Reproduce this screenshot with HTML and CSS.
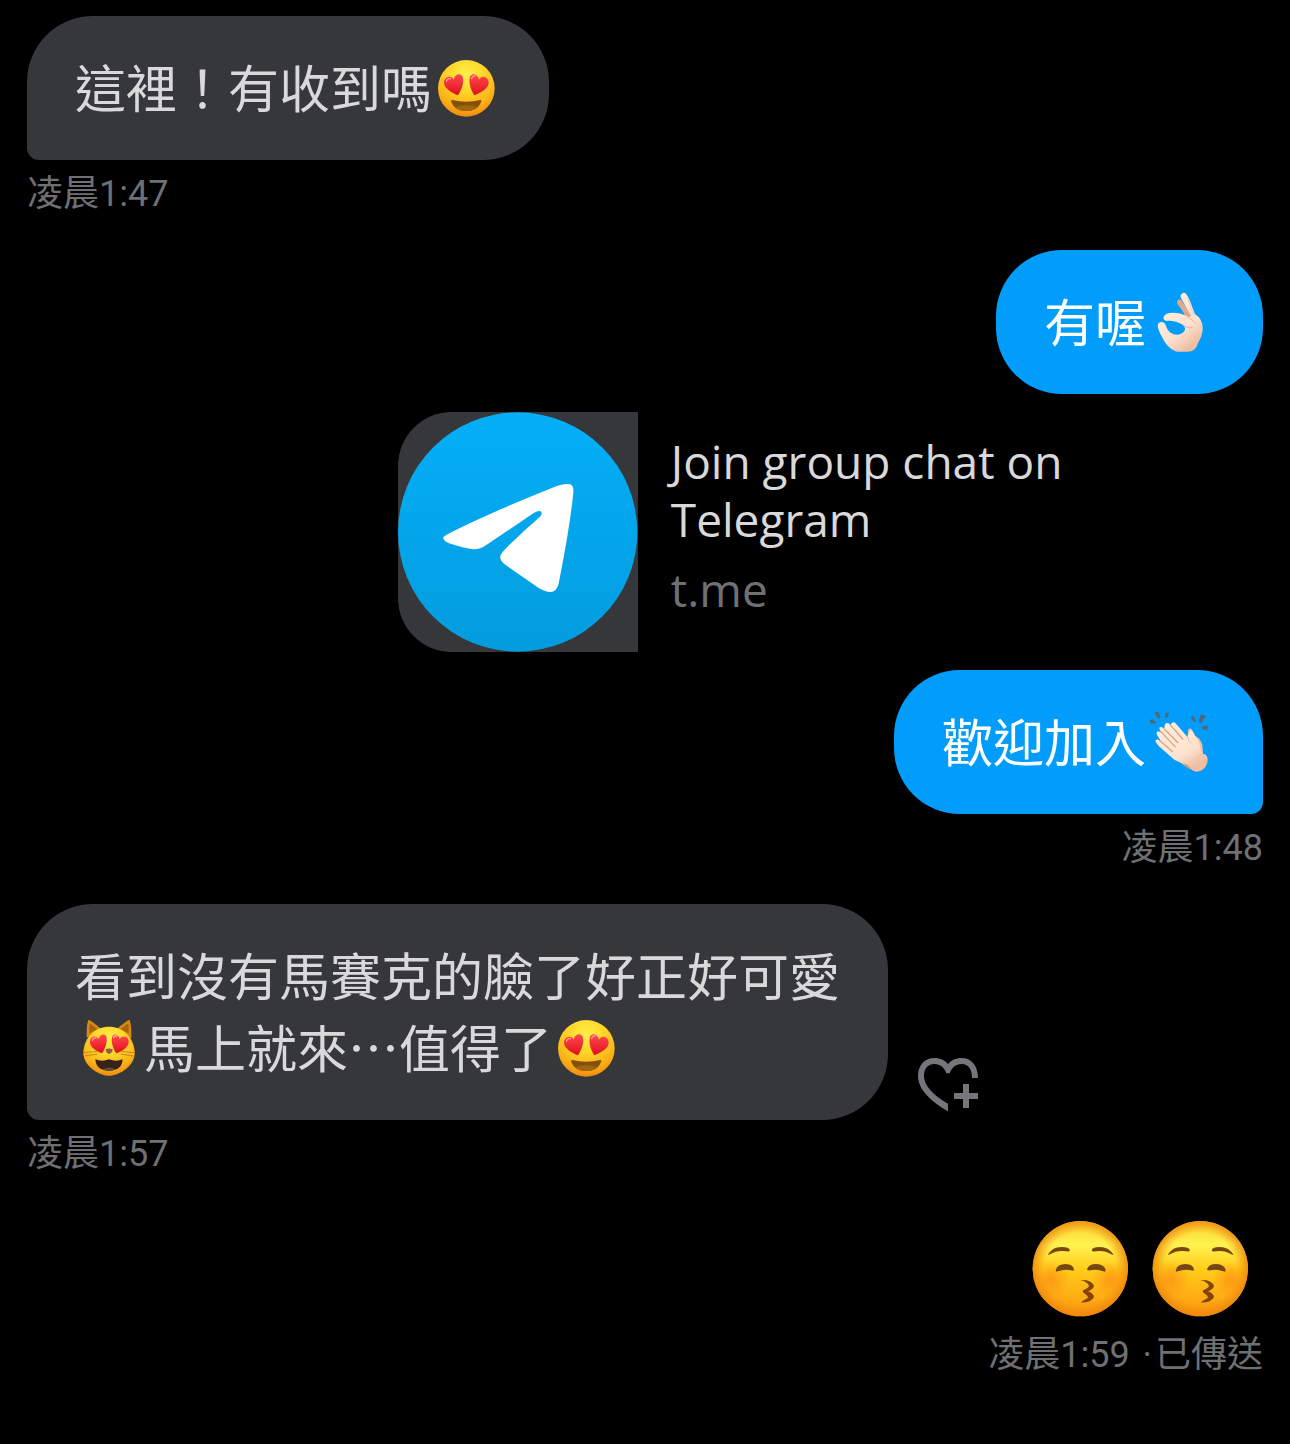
FILE: index.html
```html
<!doctype html>
<html lang="zh-Hant">
<head>
  <meta charset="utf-8">
  <meta name="viewport" content="width=device-width, initial-scale=1">
  <title>訊息</title>
  <link rel="stylesheet" href="styles.css">
</head>
<body>
  <!-- shared emoji artwork -->
  <svg class="defs" aria-hidden="true">
    <defs>
      <radialGradient id="skinYellow" cx=".5" cy=".25" r=".78">
        <stop offset="0" stop-color="#fff048"/>
        <stop offset=".4" stop-color="#fed62a"/>
        <stop offset=".75" stop-color="#fbb016"/>
        <stop offset="1" stop-color="#ec860c"/>
      </radialGradient>
      <linearGradient id="heartRed" x1="0" y1="0" x2="0" y2="1">
        <stop offset="0" stop-color="#ff4a4c"/>
        <stop offset="1" stop-color="#e0101f"/>
      </linearGradient>
      <linearGradient id="hand" x1="0" y1="0" x2=".6" y2="1">
        <stop offset="0" stop-color="#fff0e0"/>
        <stop offset=".7" stop-color="#fde3d0"/>
        <stop offset="1" stop-color="#eebda2"/>
      </linearGradient>
      <radialGradient id="blush">
        <stop offset="0" stop-color="#ff7a12" stop-opacity=".55"/>
        <stop offset="1" stop-color="#ff7a12" stop-opacity="0"/>
      </radialGradient>
      <linearGradient id="kissSkin" x1="0" y1="0" x2="0" y2="1">
        <stop offset="0" stop-color="#fbd22c"/>
        <stop offset=".25" stop-color="#fff250"/>
        <stop offset=".5" stop-color="#ffcd1a"/>
        <stop offset="1" stop-color="#fd960e"/>
      </linearGradient>
      <radialGradient id="kissEdge">
        <stop offset=".75" stop-color="#f08a10" stop-opacity="0"/>
        <stop offset="1" stop-color="#ec820c" stop-opacity=".8"/>
      </radialGradient>
    </defs>
    <symbol id="heartEyes" viewBox="6 24 207 180">
      <circle cx="109" cy="115" r="85" fill="url(#skinYellow)"/>
      <path d="M84 136C68 129 42 116 42 98C42 80 64 74 71 89C74 70 96 67 99 84C102 103 93 122 84 136Z" fill="url(#heartRed)"/>
      <path d="M133 136C149 129 176 116 176 98C176 80 154 74 147 89C144 70 122 67 119 84C116 103 124 122 133 136Z" fill="url(#heartRed)"/>
      <path d="M49 94Q53 84 61 86M125 86Q128 75 136 78" fill="none" stroke="#ff9c96" stroke-width="4" stroke-linecap="round"/>
      <path d="M66 150Q109 161 151 150Q156 150 153 157Q143 183 109 183Q74 183 64 157Q62 150 66 150Z" fill="#84500c"/>
      <path d="M74 172Q109 160 144 172Q132 183 109 183Q86 183 74 172Z" fill="#a0660f"/>
    </symbol>
    <symbol id="catEyes" viewBox="15 24 207 180">
      <path d="M50 82Q49 45 55 30Q60 28 90 54L144 54Q174 28 179 30Q185 48 184 84Z" fill="#d68a12"/>
      <path d="M58 70Q57 48 60 40L82 58ZM176 70Q177 48 174 40L152 58Z" fill="#a8640d"/>
      <path d="M117 50C158 50 190 80 194 125C197 165 150 197 117 197C84 197 38 165 40 125C44 80 76 50 117 50Z" fill="url(#skinYellow)"/>
      <path d="M96 130C80 124 58 112 60 92C62 78 80 75 86 87C89 71 108 69 110 83C112 100 104 119 96 130Z" fill="url(#heartRed)"/>
      <path d="M139 130C155 124 178 112 176 92C174 78 156 75 149 87C146 71 128 69 126 83C123 100 131 119 139 130Z" fill="url(#heartRed)"/>
      <path d="M67 91Q70 82 78 84M131 83Q134 75 141 78" fill="none" stroke="#ffaba2" stroke-width="4" stroke-linecap="round"/>
      <path d="M107 118Q117 113 128 118Q128 129 117 132Q107 129 107 118Z" fill="#8b6044"/>
      <path d="M76 148Q96 156 117 148Q138 156 158 148Q156 182 117 182Q78 182 76 148Z" fill="#38231a"/>
      <path d="M98 177Q117 168 136 177Q130 182 117 182Q104 182 98 177Z" fill="#604a40"/>
      <path d="M41 128L82 124M44 138L82 132M193 128L152 124M190 138L152 132" stroke="#a87012" stroke-width="2"/>
    </symbol>
    <symbol id="okHand" viewBox="18 36 207 180">
      <path d="M112 62Q119 53 127 64L158 112L140 116Q126 88 114 74Q109 67 112 62Z" fill="#dfa98e"/>
      <path d="M123 44Q130 34 139 42C150 58 155 78 165 103C181 112 189 128 188 150C187 166 180 178 173 192Q168 213 145 215H112C93 211 77 194 68 175Q58 158 54 143Q51 128 63 126Q73 124 78 138Q84 157 101 163Q121 168 133 153Q139 141 128 134C112 126 98 121 78 123Q68 119 71 110Q77 98 98 98Q123 98 146 111L154 109C144 94 133 70 123 54Q120 48 123 44Z" fill="url(#hand)"/>
      <path d="M127 133Q139 145 157 143M142 111Q158 118 166 130" fill="none" stroke="#e6b69d" stroke-width="3" stroke-linecap="round"/>
      <path d="M144 56Q151 85 162 106" fill="none" stroke="#f2c9b2" stroke-width="3"/>
    </symbol>
    <symbol id="clap" viewBox="18 36 207 180">
      <path d="M28 63L37 56L50 70L33 71ZM44 39L55 33L62 54L54 56ZM76 38L89 39L80 54L75 52ZM152 51L161 47L168 65L162 67ZM183 42L198 48L183 70L176 67ZM186 80L203 76L202 91L188 87Z" fill="#4f6874"/>
      <path d="M145 88Q152 82 158 92L166 108Q182 115 187 135L190 170L140 130Z" fill="#ecc0a5"/>
      <path d="M59 82Q66 78 73 87Q73 66 86 70L92 76Q95 63 106 69L143 112Q146 90 154 91Q162 102 168 112C181 126 178 145 188 161Q203 163 203 179Q202 205 178 214Q163 218 152 207Q137 203 125 190L103 179L57 139Q45 129 47 120Q52 116 58 121L63 124L53 108Q45 95 55 94L66 98Q55 87 59 82Z" fill="url(#hand)"/>
      <path d="M73 87L114 128M92 76L128 117M63 95L105 140M60 122L98 155" fill="none" stroke="#dda184" stroke-width="4" stroke-linecap="round"/>
      <path d="M129 190Q147 195 152 207Q139 206 129 190Z" fill="#cf9376"/>
      <path d="M143 112Q144 124 154 128M188 161Q178 165 170 176" fill="none" stroke="#e9bda3" stroke-width="3" stroke-linecap="round"/>
    </symbol>
    <symbol id="kiss" viewBox="0 0 360 333">
      <circle cx="181" cy="176" r="143" fill="url(#kissSkin)"/>
      <circle cx="92" cy="208" r="58" fill="url(#blush)"/>
      <circle cx="272" cy="208" r="54" fill="url(#blush)"/>
      <circle cx="181" cy="176" r="143" fill="url(#kissEdge)"/>
      <path d="M84 133Q98 111 124 111Q147 111 150 121Q148 126 139 124Q112 119 90 133Q85 136 84 133ZM280 133Q265 111 240 111Q217 111 215 121Q217 126 226 124Q252 119 274 133Q279 136 280 133Z" fill="#79460d"/>
      <path d="M107 181Q112 162 137 162Q160 163 162 179Q160 184 153 181Q134 176 114 184Q107 187 107 181ZM201 178Q206 162 229 162Q253 164 257 180Q257 187 250 184Q230 176 211 181Q203 183 201 178Z" fill="#744713"/>
      <path d="M181 210Q214 208 222 227Q220 238 204 244Q221 250 222 261Q214 278 184 278Q184 274 204 263Q205 257 190 248Q187 243 190 240Q203 236 207 227Q203 216 181 210Z" fill="#84440b"/>
    </symbol>
  </svg>

  <main class="chat">
    <section class="group">
      <div class="row">
        <p class="bubble received tail">這裡！有收到嗎<svg class="emoji" role="img" aria-label="😍"><use href="#heartEyes"/></svg></p>
      </div>
      <time class="time">凌晨1:47</time>
    </section>

    <section class="group mine">
      <div class="row">
        <p class="bubble sent">有喔<svg class="emoji" role="img" aria-label="👌🏻"><use href="#okHand"/></svg></p>
      </div>
      <a class="card" href="https://t.me">
        <span class="thumb">
          <svg viewBox="21 36 720 720" aria-hidden="true">
            <defs>
              <linearGradient id="telegram" x1="0" y1="0" x2="0" y2="1">
                <stop offset="0" stop-color="#04aff8"/>
                <stop offset="1" stop-color="#039cde"/>
              </linearGradient>
            </defs>
            <circle cx="380" cy="396" r="359" fill="url(#telegram)"/>
            <path d="M178 398C285 346 400 295 500 257Q522 249 538 253Q549 258 547 278C537 374 519 469 503 551Q496 577 477 576Q464 576 443 564L341 493Q319 476 333 458C365 423 413 380 447 350Q457 338 447 333Q439 332 427 340L286 435Q266 449 247 448Q224 446 174 430Q156 422 157 412Q159 407 178 398Z" fill="#fff"/>
          </svg>
        </span>
        <span class="info">
          <span class="title">Join group chat on Telegram</span>
          <span class="domain">t.me</span>
        </span>
      </a>
      <div class="row">
        <p class="bubble sent tail">歡迎加入<svg class="emoji" role="img" aria-label="👏🏻"><use href="#clap"/></svg></p>
      </div>
      <time class="time">凌晨1:48</time>
    </section>

    <section class="group">
      <div class="row">
        <p class="bubble received tail">看到沒有馬賽克的臉了好正好可愛<svg class="emoji" role="img" aria-label="😻"><use href="#catEyes"/></svg>馬上就來…值得了<svg class="emoji" role="img" aria-label="😍"><use href="#heartEyes"/></svg></p>
        <button class="react" type="button" aria-label="新增回應">
          <svg viewBox="39 39 180 162" aria-hidden="true">
            <path d="M129 199C80 170 39 135 39 92C39 60 60 39 88 39C106 39 120 46 129 57C138 46 152 39 170 39C198 39 219 60 219 99H201C201 72 190 57 170 57C152 57 140 68 134 85H124C118 68 106 57 88 57C70 57 57 70 57 92C57 122 85 150 129 176Z"/>
            <path d="M174 117H192V144H219V162H192V189H174V162H147V144H174Z"/>
          </svg>
        </button>
      </div>
      <time class="time">凌晨1:57</time>
    </section>

    <section class="group mine">
      <div class="big">
        <svg role="img" aria-label="😚"><use href="#kiss"/></svg>
        <svg role="img" aria-label="😚"><use href="#kiss"/></svg>
      </div>
      <p class="time"><time>凌晨1:59</time> <span class="dot">·</span>已傳送</p>
    </section>
  </main>
</body>
</html>
```
FILE: styles.css
```css
* {
  box-sizing: border-box;
}
body {
  margin: 0;
  background: #000;
  color: #d9d9d9;
  font-family: "Noto Sans CJK TC", sans-serif;
}
p {
  margin: 0;
}
.defs {
  position: absolute;
  width: 0;
  height: 0;
}

.chat {
  display: flex;
  flex-direction: column;
  gap: 36px;
  padding: 16px 27px 72px;
}
.group {
  display: flex;
  flex-direction: column;
  align-items: flex-start;
}
.mine {
  align-items: flex-end;
}
.row {
  display: flex;
  align-items: flex-end;
  width: 100%;
}
.mine .row {
  justify-content: flex-end;
}

/* bubbles */
.bubble {
  max-width: min(70%, 861px);
  padding: 34px 48px 38px;
  border-radius: 66px;
  font-size: 51px;
  line-height: 72px;
}
.received {
  background: #36373b;
}
.sent {
  background: #029dfb;
  color: #fff;
}
.received.tail {
  border-bottom-left-radius: 12px;
}
.sent.tail {
  border-bottom-right-radius: 12px;
}
.emoji {
  width: 69px;
  height: 60px;
  vertical-align: -10px;
  overflow: visible;
}
.time {
  margin-top: 14px;
  color: #6f7074;
  font-family: Roboto, "Noto Sans CJK TC", sans-serif;
  font-size: 36px;
  line-height: 40px;
}
.time time {
  margin-right: 4px;
}
.dot {
  margin-right: 3px;
}

/* link preview */
.card {
  display: flex;
  width: 70%;
  margin: 18px 0;
  color: inherit;
  font-family: "Open Sans", sans-serif;
  font-size: 46px;
  line-height: 58px;
  text-decoration: none;
}
.thumb {
  flex: none;
  width: 240px;
  height: 240px;
  overflow: hidden;
  border-radius: 54px 0 0 54px;
  background: #36373b;
}
.thumb svg {
  display: block;
}
.info {
  display: flex;
  flex-direction: column;
  gap: 12px;
  padding: 20px 33px;
}
.domain {
  color: #6f7074;
}

.react {
  flex: none;
  margin: 0 0 8px 30px;
  padding: 0;
  border: 0;
  background: none;
  cursor: pointer;
}
.react svg {
  display: block;
  width: 60px;
  height: 54px;
  fill: #75767b;
}

/* emoji-only message */
.big {
  display: flex;
  padding-right: 3px;
}
.big svg {
  width: 120px;
  height: 111px;
}
```
